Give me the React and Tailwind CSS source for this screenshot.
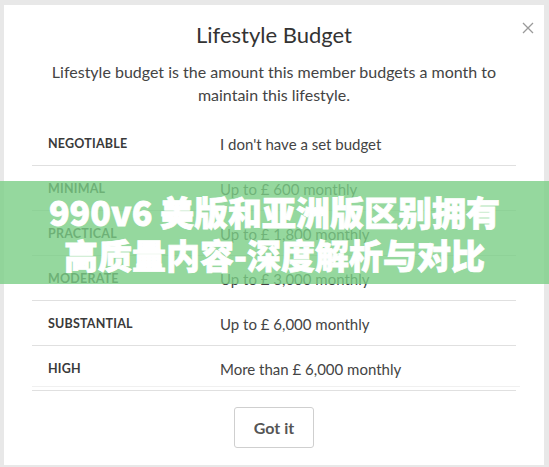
import React from "react";

const rows = [
  ["NEGOTIABLE", "I don't have a set budget"],
  ["MINIMAL", "Up to £ 600 monthly"],
  ["PRACTICAL", "Up to £ 1,800 monthly"],
  ["MODERATE", "Up to £ 3,000 monthly"],
  ["SUBSTANTIAL", "Up to £ 6,000 monthly"],
  ["HIGH", "More than £ 6,000 monthly"],
];

export default function App() {
  return (
    <div className="relative w-[549px] h-[467px] bg-[#e8e8e8] pt-[5px] pl-[4px] overflow-hidden" style={{ fontFamily: "Lato, 'Noto Sans', sans-serif" }}>
      <div className="relative w-[540px] h-[460px] bg-white px-[28px] pt-[15px]">
        <button className="absolute right-[10px] top-[17px] w-[12px] h-[12px] text-[#9a9a9a]">
          <svg viewBox="0 0 12 12" width="12" height="12" fill="none" stroke="currentColor" strokeWidth="1.3">
            <path d="M1 1L11 11M11 1L1 11" />
          </svg>
        </button>
        <h1 className="text-center text-[22px] leading-[30px] text-[#333]">Lifestyle Budget</h1>
        <p className="mt-[10px] text-center text-[16px] leading-[23px] text-[#444] px-[10px]">
          Lifestyle budget is the amount this member budgets a month to maintain this lifestyle.
        </p>
        <div className="mt-[15px] flex flex-col">
          {rows.map(([k, v]) => (
            <div key={k} className="flex items-center h-[45px] px-[16px] pt-[2px] border-b border-[#e0e0e0]">
              <div className="w-[172px] text-[12.5px] font-bold tracking-[0.2px] text-[#3a3a3a]">{k}</div>
              <div className="text-[15px] text-[#444]">{v}</div>
            </div>
          ))}
        </div>
        <div className="flex justify-center mt-[16px]">
          <button className="w-[80px] h-[41px] border border-[#cfcfcf] rounded-[3px] text-[16px] font-bold text-[#555]">Got it</button>
        </div>
        <div className="absolute left-[28px] right-[24px] top-[381px] h-px bg-[#f0f0f0]" />
      </div>
      <div className="absolute left-0 right-0 top-[181px] h-[103px] bg-[rgba(123,206,134,0.8)] flex flex-col items-center justify-center text-white font-black text-[34px] leading-[43px] [-webkit-text-stroke:0.8px_white]" style={{ fontFamily: "'Noto Sans CJK SC', sans-serif" }}>
        <div>990v6 美版和亚洲版区别拥有</div>
        <div>高质量内容-深度解析与对比</div>
      </div>
    </div>
  );
}
